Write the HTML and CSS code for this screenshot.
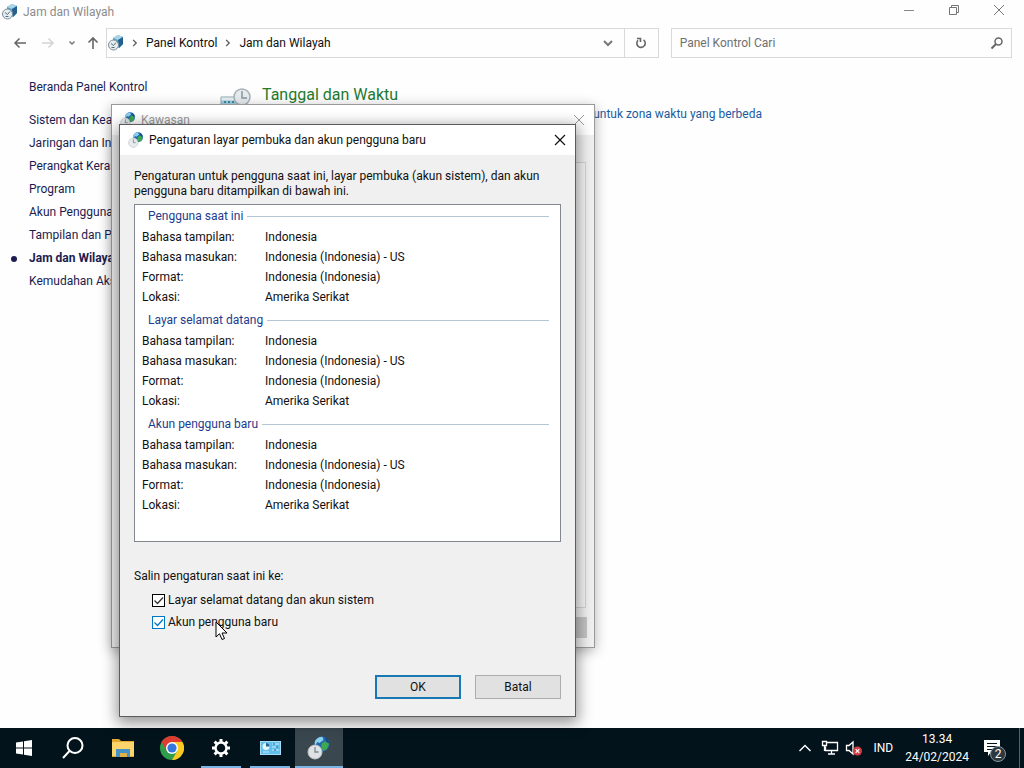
FILE: index.html
```html
<!DOCTYPE html>
<html lang="id">
<head>
<meta charset="utf-8">
<title>Jam dan Wilayah</title>
<link rel="stylesheet" href="styles.css">
</head>
<body>
<svg class="defs" aria-hidden="true">
  <defs>
    <symbol id="region" viewBox="0 0 24 24">
      <circle cx="15" cy="8" r="7.500" fill="#2368ad"/>
      <path d="M8.500 4q4-4 7-3l1 3-4 3-2-1-2 3-1-2z" fill="#8bd0ed"/>
      <path d="M15 7l4-2 3 3-2 5-4 2-2-5z" fill="#3fa84f"/>
      <path d="M18 1q4 2 4 6l-3-1z" fill="#164a88"/>
      <circle cx="8" cy="16" r="7" fill="#e8ebed" fill-opacity=".95" stroke="#bcc4c9"/>
      <path d="M8 11v5h3.500" fill="none" stroke="#7d8790" stroke-width="1.300"/>
    </symbol>
    <symbol id="clockcube" viewBox="0 0 16 16">
      <path d="M5 3l5-3 5 2v7l-4 4-6-4z" fill="#4f9fc6"/>
      <path d="M5 3l5-3 5 2-5 3z" fill="#a9d6e6"/>
      <path d="M10 5l5-3v7l-4 4z" fill="#23608f"/>
      <circle cx="5.500" cy="10" r="5" fill="#e6edf0" stroke="#7b8c98"/>
      <path d="M5.500 10.500L8 7.500M3 8.500l2.500 2M3.500 12.500h3" fill="none" stroke="#546c7c"/>
    </symbol>
  </defs>
</svg>

<div class="desktop">
  <main class="window">
    <header class="titlebar">
      <svg class="icon16"><use href="#clockcube"/></svg>
      <span class="window-title">Jam dan Wilayah</span>
      <button class="caption" aria-label="Minimalkan"><svg width="12" height="12"><path d="M1 6.500h10" stroke="#888"/></svg></button>
      <button class="caption" aria-label="Pulihkan"><svg width="12" height="12" fill="none" stroke="#777"><path d="M1.500 3.500h7v7h-7zM3.500 3V1.500h7v7H9"/></svg></button>
      <button class="caption" aria-label="Tutup"><svg width="12" height="12"><path d="M1 1l10 10M11 1L1 11" stroke="#777"/></svg></button>
    </header>

    <nav class="navbar">
      <button class="nav back" aria-label="Kembali"><svg width="14" height="14" fill="none" stroke="#666" stroke-width="1.500"><path d="M13 7H2M6.500 2.500L2 7l4.500 4.500"/></svg></button>
      <button class="nav forward" aria-label="Maju"><svg width="14" height="14" fill="none" stroke="#d4d4d4" stroke-width="1.500"><path d="M1 7h11M7.500 2.500L12 7l-4.500 4.500"/></svg></button>
      <button class="nav recent" aria-label="Lokasi terbaru"><svg width="8" height="8" fill="none" stroke="#777" stroke-width="1.500"><path d="M1.500 2.500L4 5l2.500-2.500"/></svg></button>
      <button class="nav up" aria-label="Naik"><svg width="14" height="14" fill="none" stroke="#666" stroke-width="1.600"><path d="M7 13V2M2.500 6.500L7 2l4.500 4.500"/></svg></button>
      <div class="address">
        <svg class="icon16"><use href="#clockcube"/></svg>
        <svg class="sep" viewBox="0 0 6 8"><path d="M1.500 1.500L4 4 1.500 6.500"/></svg>
        <a class="crumb" href="#">Panel Kontrol</a>
        <svg class="sep" viewBox="0 0 6 8"><path d="M1.500 1.500L4 4 1.500 6.500"/></svg>
        <a class="crumb" href="#">Jam dan Wilayah</a>
        <button class="drop" aria-label="Riwayat alamat"><svg width="12" height="12" fill="none" stroke="#777" stroke-width="2"><path d="M2 4l4 4 4-4"/></svg></button>
        <button class="refresh" aria-label="Segarkan"><svg width="14" height="14" fill="none" stroke="#666" stroke-width="1.600"><path d="M9.500 3.800A4.200 4.200 0 1 1 4 4.300M3 2.500h3.500V6"/></svg></button>
      </div>
      <div class="search">
        <input type="text" aria-label="Cari" placeholder="Panel Kontrol Cari">
        <svg width="14" height="14" fill="none" stroke="#666"><circle cx="8.500" cy="5.500" r="3.500" stroke-width="1.500"/><path d="M6 8l-4.500 4.500" stroke-width="2"/></svg>
      </div>
    </nav>

    <div class="content">
      <aside class="sidebar">
        <a class="home" href="#">Beranda Panel Kontrol</a>
        <ul>
          <li><a href="#">Sistem dan Keamanan</a></li>
          <li><a href="#">Jaringan dan Internet</a></li>
          <li><a href="#">Perangkat Keras dan Suara</a></li>
          <li><a href="#">Program</a></li>
          <li><a href="#">Akun Pengguna</a></li>
          <li><a href="#">Tampilan dan Personalisasi</a></li>
          <li class="current"><a href="#" aria-current="page">Jam dan Wilayah</a></li>
          <li><a href="#">Kemudahan Akses</a></li>
        </ul>
      </aside>
      <section class="category">
        <svg class="category-icon" viewBox="0 0 32 32">
          <path d="M1 10h19v14H1z" fill="#9ccfe0" stroke="#8fa7b0"/>
          <path d="M1.500 10.500h18v3h-18z" fill="#e6eef0"/>
          <path d="M4 15h2m2 0h2m2 0h2m-10 3h2m2 0h2m2 0h2" stroke="#26718c" stroke-width="1.500"/>
          <circle cx="22" cy="10" r="8" fill="#e6ebed" stroke="#a6b0b6" stroke-width="1.500"/>
          <path d="M22 4v7h5" fill="none" stroke="#8a979f" stroke-width="1.500"/>
        </svg>
        <div class="category-text">
          <h1><a href="#">Tanggal dan Waktu</a></h1>
          <a class="task" href="#">Tambahkan jam untuk zona waktu yang berbeda</a>
        </div>
      </section>
    </div>
  </main>

  <div class="dialog region" role="dialog" aria-label="Kawasan">
    <div class="dialog-title">
      <svg class="icon16"><use href="#region"/></svg>
      <span>Kawasan</span>
      <button class="close" aria-label="Tutup"><svg width="12" height="12"><path d="M1 1l10 10M11 1L1 11" stroke="#999"/></svg></button>
    </div>
    <div class="tab-pane"></div>
    <div class="region-actions"><button aria-label="Terapkan" disabled></button></div>
  </div>

  <form class="dialog copy" role="dialog" aria-labelledby="copy-title">
    <div class="dialog-title">
      <svg class="icon16"><use href="#region"/></svg>
      <span id="copy-title">Pengaturan layar pembuka dan akun pengguna baru</span>
      <button type="button" class="close" aria-label="Tutup"><svg width="12" height="12"><path d="M1 1l10 10M11 1L1 11" stroke="#111" stroke-width="1.200"/></svg></button>
    </div>
    <div class="dialog-body">
      <p class="intro">Pengaturan untuk pengguna saat ini, layar pembuka (akun sistem), dan akun<br>pengguna baru ditampilkan di bawah ini.</p>
      <div class="settings">
        <section>
          <h2>Pengguna saat ini</h2>
          <dl>
            <dt>Bahasa tampilan:</dt><dd>Indonesia</dd>
            <dt>Bahasa masukan:</dt><dd>Indonesia (Indonesia) - US</dd>
            <dt>Format:</dt><dd>Indonesia (Indonesia)</dd>
            <dt>Lokasi:</dt><dd>Amerika Serikat</dd>
          </dl>
        </section>
        <section>
          <h2>Layar selamat datang</h2>
          <dl>
            <dt>Bahasa tampilan:</dt><dd>Indonesia</dd>
            <dt>Bahasa masukan:</dt><dd>Indonesia (Indonesia) - US</dd>
            <dt>Format:</dt><dd>Indonesia (Indonesia)</dd>
            <dt>Lokasi:</dt><dd>Amerika Serikat</dd>
          </dl>
        </section>
        <section>
          <h2>Akun pengguna baru</h2>
          <dl>
            <dt>Bahasa tampilan:</dt><dd>Indonesia</dd>
            <dt>Bahasa masukan:</dt><dd>Indonesia (Indonesia) - US</dd>
            <dt>Format:</dt><dd>Indonesia (Indonesia)</dd>
            <dt>Lokasi:</dt><dd>Amerika Serikat</dd>
          </dl>
        </section>
      </div>
      <p class="copy-label">Salin pengaturan saat ini ke:</p>
      <div class="checks">
        <label><span class="box"><input type="checkbox" checked><svg viewBox="0 0 13 13"><path d="M2.500 6.500l3 3 5.500-6"/></svg></span>Layar selamat datang dan akun sistem</label>
        <label class="hot"><span class="box"><input type="checkbox" checked><svg viewBox="0 0 13 13"><path d="M2.500 6.500l3 3 5.500-6"/></svg></span>Akun pengguna baru</label>
      </div>
      <div class="actions">
        <button type="button" class="default">OK</button>
        <button type="button">Batal</button>
      </div>
    </div>
  </form>

  <footer class="taskbar">
    <div class="apps">
      <button aria-label="Mulai"><svg width="18" height="18" fill="#fff"><path d="M0 3.500l7-1v6H0zM8 2.300L16 1v7.500H8zM0 9.500h7v6l-7-1zM8 9.500h8V17l-8-1.300z"/></svg></button>
      <button aria-label="Cari"><svg width="24" height="24" fill="none" stroke="#fff" stroke-width="2"><circle cx="13" cy="9.500" r="7.500"/><path d="M7.500 15L1 22"/></svg></button>
      <button aria-label="File Explorer"><svg width="22" height="20"><path d="M0 1h7l2 2h13v16H0z" fill="#e2a82f"/><path d="M0 4h22v14H0z" fill="#fbd56b"/><path d="M4 11h14v8h-3v-4H8v4H4z" fill="#4593c6"/><path d="M8 15h7v4H8z" fill="#e2b04a"/></svg></button>
      <button aria-label="Google Chrome"><svg width="24" height="24" viewBox="0 0 24 24"><circle cx="12" cy="12" r="12" fill="#2f9e4a"/><path d="M1.600 6A12 12 0 0 1 22.400 6H12L6.800 15z" fill="#e03c31"/><path d="M22.400 6A12 12 0 0 1 12 24L17.200 15 12 6z" fill="#fbc920"/><circle cx="12" cy="12" r="6" fill="#fff"/><circle cx="12" cy="12" r="4.600" fill="#3577dc"/></svg></button>
      <button class="running" aria-label="Pengaturan"><svg width="20" height="20" viewBox="0 0 20 20" fill="none" stroke="#fff"><circle cx="10" cy="10" r="5.500" stroke-width="2.500"/><path d="M10 1v3M10 16v3M1 10h3M16 10h3M3.600 3.600l2.200 2.200M14.200 14.200l2.200 2.200M3.600 16.400l2.200-2.200M14.200 5.800l2.200-2.200" stroke-width="3"/></svg></button>
      <button class="running" aria-label="Panel Kontrol"><svg width="21" height="16"><path d="M0 1h21v14H0z" fill="#a5dcf7"/><path d="M1 2h19v12H1z" fill="#5fc0ee"/><circle cx="6" cy="6.500" r="3.500" fill="#e4f5fc"/><path d="M6 6.500V3a3.500 3.500 0 0 1 3.500 3.500z" fill="#27638f"/><path d="M12 4h7M12 7h5M12 10h7M3 12h6" stroke="#c9ecfb"/><path d="M14 3v2M17 6v2M15 9v2" stroke="#1e6593"/></svg></button>
      <button class="running active" aria-label="Jam dan Wilayah"><svg width="24" height="24"><use href="#region"/></svg></button>
    </div>
    <div class="tray">
      <button class="more" aria-label="Ikon tersembunyi"><svg width="14" height="10" fill="none" stroke="#fff" stroke-width="1.400"><path d="M1.500 8L7 2.500 12.500 8"/></svg></button>
      <svg class="network" width="18" height="16" fill="none" stroke="#fff" stroke-width="1.300"><path d="M6 2.500h10.500v8H4.500V6.500M10.500 10.500v3M7 14h7M1.500 1.500h4v4h-4zM3.500 6v5"/></svg>
      <svg class="volume" width="18" height="16"><path d="M1.500 5.500H4l4-3.500v12l-4-3.500H1.500z" fill="none" stroke="#fff" stroke-width="1.300"/><circle cx="12.500" cy="11" r="4.500" fill="#d63b43"/><path d="M10.700 9.200l3.600 3.600m0-3.600l-3.600 3.600" stroke="#fff" stroke-width="1.200"/></svg>
      <span class="lang">IND</span>
      <div class="clock"><span>13.34</span><span>24/02/2024</span></div>
      <button class="notify" aria-label="Pemberitahuan"><svg width="18" height="18"><path d="M1 1h16v12H8l-3 4v-4H1z" fill="#fff"/><path d="M4 4.500h10M4 7.500h10M4 10.500h6" stroke="#03131f"/></svg><span class="badge">2</span></button>
    </div>
  </footer>

  <svg class="cursor" width="13" height="20"><path d="M1 1v15l3.500-3.300L7 18.500l2.500-1-2.500-5.500h5z" fill="#fff" stroke="#000"/></svg>
</div>
</body>
</html>
```

FILE: styles.css
```css
* { box-sizing: border-box; }
body {
  margin: 0;
  font: 12px/16px Roboto, "Open Sans", sans-serif;
  color: #111;
  background: #fff;
}
button { font: inherit; color: inherit; padding: 0; border: 0; background: none; }
a { color: inherit; text-decoration: none; }
h1, h2, p, ul, dl, dd { margin: 0; padding: 0; font-weight: normal; }
svg { flex: none; display: block; }
.defs { position: absolute; width: 0; height: 0; }
.icon16 { width: 16px; height: 16px; }

.desktop { position: relative; display: flex; flex-direction: column; min-height: 100vh; overflow: hidden; }
.window { flex: 1; display: flex; flex-direction: column; background: #fefefe; }

.titlebar { display: flex; align-items: center; gap: 5px; height: 24px; padding-left: 2px; padding-right: 5px; color: #8c8c8c; }
.window-title { flex: 1; }
.caption { width: 40px; height: 20px; align-self: flex-start; display: grid; place-items: center; }

.navbar { display: flex; align-items: center; height: 38px; padding: 0 12px 0 8px; }
.nav { display: grid; place-items: center; height: 30px; }
.back { width: 24px; }
.forward { width: 32px; }
.recent { width: 16px; }
.up { width: 26px; }
.address { flex: 1; display: flex; align-items: center; height: 30px; border: 1px solid #d9d9d9; padding-left: 1px; }
.sep { width: 8px; height: 10px; margin: 0 7px; fill: none; stroke: #555; stroke-width: 1; }
.drop { width: 32px; height: 28px; margin-left: auto; display: grid; place-items: center; }
.refresh { width: 34px; height: 28px; border-left: 1px solid #d9d9d9; display: grid; place-items: center; }
.search { width: 34%; display: flex; align-items: center; height: 30px; margin-left: 12px; border: 1px solid #d9d9d9; padding: 0 7px 0 8px; }
.search input { flex: 1; min-width: 0; border: 0; padding: 0; outline: 0; font: inherit; background: none; }
.search input::placeholder { color: #707070; opacity: 1; }

.content { flex: 1; display: flex; padding-top: 16px; }
.sidebar { width: 220px; padding-left: 29px; color: #1c1c50; white-space: nowrap; }
.home { display: block; line-height: 18px; margin-bottom: 13px; }
.sidebar ul { list-style: none; }
.sidebar li { line-height: 23px; }
.current { display: flex; align-items: center; font-weight: bold; }
.current::before { content: ""; width: 6px; height: 6px; margin-left: -18px; margin-right: 12px; border-radius: 50%; background: #1c1c50; }
.category { display: flex; gap: 10px; padding-top: 6px; }
.category-icon { width: 32px; height: 32px; margin-top: 3px; }
.category-text { width: 500px; }
.category h1 { font-size: 16px; line-height: 22px; color: #1f7a2e; }
.task { display: block; text-align: right; color: #1a5c9e; }

.dialog { position: absolute; display: flex; flex-direction: column; background: #f0f0f0; }
.dialog-title { display: flex; align-items: center; gap: 5px; height: 30px; padding: 0 9px 0 8px; background: #fff; }
.dialog-title .close { margin-left: auto; }
.region { left: 111px; top: 104px; width: 484px; height: 544px; border: 1px solid #999; box-shadow: 0 3px 12px rgba(0, 0, 0, .3); }
.region .dialog-title { color: #999; }
.tab-pane { flex: 1; margin: 27px 8px 9px; border: 1px solid #d4d4d4; background: #f6f6f6; }
.region-actions { display: flex; justify-content: flex-end; padding: 0 7px 9px; }
.region-actions button { width: 75px; height: 21px; background: #c4c4c4; }

.copy { left: 119px; top: 124px; width: 457px; border: 1px solid #5c5c5c; box-shadow: 0 4px 14px 2px rgba(0, 0, 0, .42); }
.dialog-body { padding: 14px 14px 17px; }
.intro { line-height: 15px; margin-bottom: 5px; white-space: nowrap; }
.settings { height: 338px; padding: 1px 11px 0 7px; border: 1px solid #828790; background: #fff; }
.settings section { margin-bottom: 3px; }
.settings h2 { display: flex; align-items: center; gap: 4px; height: 20px; margin-bottom: 1px; padding-left: 6px; font-size: 12px; color: #1d3c8c; }
.settings h2::after { content: ""; flex: 1; height: 1px; background: #b4c6d2; }
.settings dl { display: grid; grid-template-columns: 123px 1fr; line-height: 20px; }
.copy-label { margin-top: 26px; }
.checks { display: flex; flex-direction: column; gap: 6px; margin-top: 8px; padding-left: 18px; }
.checks label { display: flex; align-items: center; gap: 3px; }
.box { display: grid; color: #333; }
.box > * { grid-area: 1 / 1; width: 13px; height: 13px; }
.box input { appearance: none; margin: 0; border: 1px solid currentColor; background: #fff; }
.box svg { pointer-events: none; fill: none; stroke: currentColor; stroke-width: 1.3; z-index: 1; }
.hot .box, .hot .box input { color: #0078c8; }
.actions { display: flex; justify-content: flex-end; gap: 14px; margin-top: 45px; }
.actions button { width: 86px; height: 24px; border: 1px solid #adadad; background: #e1e1e1; }
.actions .default { border: 2px solid #1878b4; }

.taskbar { display: flex; justify-content: space-between; height: 40px; background: #03131c; color: #fff; }
.apps { display: flex; gap: 1px; padding-left: 1px; }
.apps button { width: 48px; height: 40px; display: grid; place-items: center; }
.apps .running { background: linear-gradient(#79b4e4, #79b4e4) center bottom / 40px 2px no-repeat; }
.apps .active { background: linear-gradient(#79b4e4, #79b4e4) center bottom / 48px 2px no-repeat #3a474f; }
.tray { display: flex; align-items: center; margin-right: 4px; padding-right: 18px; border-right: 1px solid #56616a; }
.more { margin-right: 9px; }
.network { margin-right: 6px; }
.volume { margin-right: 10px; }
.lang { margin-right: 12px; }
.clock { display: flex; flex-direction: column; align-items: center; line-height: 18px; margin-right: 14px; }
.notify { position: relative; }
.badge { position: absolute; left: 7px; top: 7px; width: 16px; height: 16px; border: 1px solid #8a949c; border-radius: 50%; background: #2b3840; line-height: 14px; text-align: center; }

.cursor { position: absolute; left: 215px; top: 621px; }
```
